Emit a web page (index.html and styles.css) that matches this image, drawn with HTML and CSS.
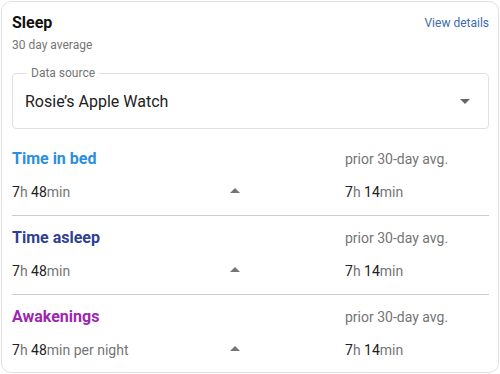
FILE: index.html
```html
<!DOCTYPE html>
<html lang="en">
<head>
    <meta charset="UTF-8">
    <meta name="viewport" content="width=device-width, initial-scale=1.0">
    <title>Sleep</title>
    <link rel="stylesheet" href="styles.css">
</head>
<body>
    <div class="card">
        <div class="head">
            <div>
                <h2 class="title">Sleep</h2>
                <div class="sub">30 day average</div>
            </div>
            <a class="link" href="#">View details</a>
        </div>

        <fieldset class="field">
            <legend>Data source</legend>
            <div class="select">
                <span>Rosie’s Apple Watch</span>
                <span class="caret-down"></span>
            </div>
        </fieldset>

        <div class="stat">
            <div class="stat-name bed">Time in bed</div>
            <div class="stat-mid"></div>
            <div class="prior">prior 30-day avg.</div>
            <div class="val"><b>7</b>h <b>48</b>min</div>
            <div class="stat-mid"><span class="caret-up"></span></div>
            <div class="val"><b>7</b>h <b>14</b>min</div>
        </div>

        <div class="stat">
            <div class="stat-name asleep">Time asleep</div>
            <div class="stat-mid"></div>
            <div class="prior">prior 30-day avg.</div>
            <div class="val"><b>7</b>h <b>48</b>min</div>
            <div class="stat-mid"><span class="caret-up"></span></div>
            <div class="val"><b>7</b>h <b>14</b>min</div>
        </div>

        <div class="stat last">
            <div class="stat-name wake">Awakenings</div>
            <div class="stat-mid"></div>
            <div class="prior">prior 30-day avg.</div>
            <div class="val"><b>7</b>h <b>48</b>min per night</div>
            <div class="stat-mid"><span class="caret-up"></span></div>
            <div class="val"><b>7</b>h <b>14</b>min</div>
        </div>
    </div>
</body>
</html>
```

FILE: styles.css
```css
*{
    padding: 0;
    margin: 0;
    box-sizing: border-box;
}
body{
    font-family: Roboto, "Liberation Sans", sans-serif;
    background: #fff;
    color: #212121;
}
.card{
    margin: 1px;
    width: 498px;
    height: 372px;
    border: 1px solid #e0e0e0;
    border-radius: 10px;
    padding: 11px 9px 0 10px;
    overflow: hidden;
}
.head{
    display: flex;
    justify-content: space-between;
    align-items: flex-start;
}
.title{
    font-size: 16px;
    font-weight: 700;
    line-height: 20px;
    color: #111;
}
.sub{
    margin-top: 4px;
    font-size: 12px;
    line-height: 16px;
    color: #757575;
}
.link{
    margin-top: 2px;
    font-size: 12px;
    line-height: 16px;
    color: #3b6cab;
    text-decoration: none;
}
.field{
    margin-top: 13px;
    height: 63px;
    border: 1px solid #e0e0e0;
    border-radius: 4px;
    padding: 0 18px 0 12px;
}
.field legend{
    margin-left: 2px;
    padding: 0 4px;
    font-size: 12px;
    line-height: 14px;
    color: #757575;
}
.select{
    display: flex;
    justify-content: space-between;
    align-items: center;
    height: 40px;
    margin-top: 1px;
    font-size: 16px;
    color: #212121;
}
.caret-down{
    width: 0;
    height: 0;
    border-left: 5px solid transparent;
    border-right: 5px solid transparent;
    border-top: 5px solid #666;
}
.caret-up{
    display: inline-block;
    width: 0;
    height: 0;
    border-left: 5px solid transparent;
    border-right: 5px solid transparent;
    border-bottom: 5px solid #757575;
}
.stat{
    display: grid;
    grid-template-columns: 218px 115px 1fr;
    row-gap: 13px;
    padding: 12px 0 13px;
    border-bottom: 1px solid #cccccc;
}
.field + .stat{
    padding-top: 20px;
}
.stat.last{
    border-bottom: none;
}
.stat-name{
    font-size: 16px;
    font-weight: 700;
    line-height: 20px;
}
.bed{ color: #2b8ee0; }
.asleep{ color: #2f3f93; }
.wake{ color: #9b27b0; }
.prior{
    font-size: 14px;
    line-height: 20px;
    color: #757575;
}
.val{
    font-size: 14px;
    line-height: 20px;
    color: #757575;
}
.val b{
    font-weight: 400;
    color: #212121;
}
.stat-mid{
    display: flex;
    align-items: center;
    padding-bottom: 4px;
}
```
